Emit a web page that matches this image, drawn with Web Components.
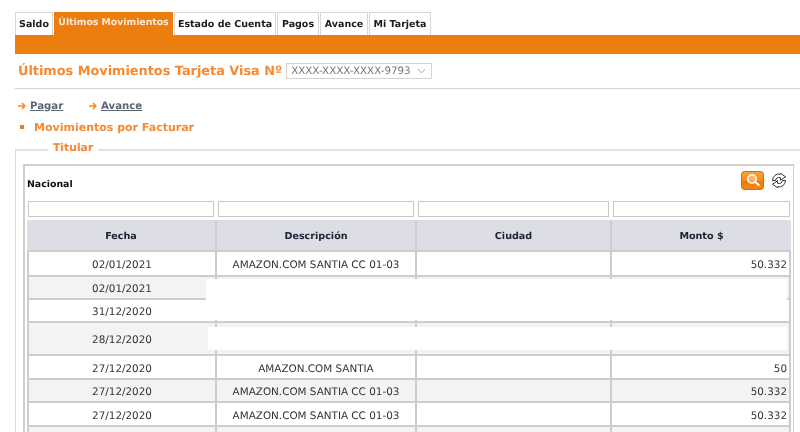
<!DOCTYPE html>
<html lang="es">
<head>
<meta charset="utf-8">
<title>Últimos Movimientos</title>
<style>
  html, body { margin: 0; padding: 0; background: #fff; overflow: hidden; }
  body { font-family: "DejaVu Sans", Verdana, sans-serif; font-size: 10.67px; color: #333; height: 432px; text-rendering: geometricPrecision; }
</style>
</head>
<body>
<card-page>
  <tab-bar>
    <tab-item style="width:38px">Saldo</tab-item>
    <tab-item active style="width:119px">Últimos Movimientos</tab-item>
    <tab-item style="width:102px">Estado de Cuenta</tab-item>
    <tab-item style="width:42px">Pagos</tab-item>
    <tab-item style="width:48px">Avance</tab-item>
    <tab-item style="width:62px">Mi Tarjeta</tab-item>
  </tab-bar>
  <card-heading number="XXXX-XXXX-XXXX-9793">Últimos Movimientos Tarjeta Visa Nº</card-heading>
  <action-links>
    <action-link style="width:71px">Pagar</action-link>
    <action-link>Avance</action-link>
  </action-links>
  <section-title>Movimientos por Facturar</section-title>
  <titular-box legend="Titular">
    <moves-table title-text="Nacional">
      <moves-row h="25" date="02/01/2021" desc="AMAZON.COM SANTIA CC 01-03" amount="50.332"></moves-row>
      <moves-row h="23" alt date="02/01/2021" cover="first"></moves-row>
      <moves-row h="23" date="31/12/2020" cover="plain"></moves-row>
      <moves-row h="33" alt date="28/12/2020" cover="second"></moves-row>
      <moves-row h="24" date="27/12/2020" desc="AMAZON.COM SANTIA" amount="50"></moves-row>
      <moves-row h="23" alt date="27/12/2020" desc="AMAZON.COM SANTIA CC 01-03" amount="50.332"></moves-row>
      <moves-row h="24" date="27/12/2020" desc="AMAZON.COM SANTIA CC 01-03" amount="50.332"></moves-row>
      <moves-row h="24" alt></moves-row>
    </moves-table>
  </titular-box>
</card-page>

<script>
class CardPage extends HTMLElement {
  constructor() {
    super();
    this.attachShadow({ mode: "open" });
    this.shadowRoot.innerHTML = `
      <style>
        :host { display: block; padding: 12px 0 0 15px; height: 420px; overflow: hidden; filter: blur(.3px); }
      </style>
      <slot></slot>`;
  }
}

class TabBar extends HTMLElement {
  constructor() {
    super();
    this.attachShadow({ mode: "open" });
    this.shadowRoot.innerHTML = `
      <style>
        :host { display: block; }
        .tabs { display: flex; gap: 1px; height: 23px; }
        .bar { height: 19px; background: #ec7e10; }
      </style>
      <div class="tabs"><slot></slot></div>
      <div class="bar"></div>`;
  }
}

class TabItem extends HTMLElement {
  constructor() {
    super();
    this.attachShadow({ mode: "open" });
    this.shadowRoot.innerHTML = `
      <style>
        :host {
          display: flex; align-items: center; justify-content: center;
          box-sizing: border-box; height: 23px; white-space: nowrap;
          border: 1px solid #d8d8d8; border-bottom: 0;
          font-weight: bold; font-size: 9.5px; color: #1c1c1c;
        }
        :host([active]) {
          background: #ec7e10; border-color: #ec7e10; color: #fde9d4;
          align-items: flex-start; padding-top: 4px; font-size: 9.3px;
        }
      </style>
      <slot></slot>`;
  }
}

class CardHeading extends HTMLElement {
  constructor() {
    super();
    this.attachShadow({ mode: "open" });
    this.shadowRoot.innerHTML = `
      <style>
        :host {
          display: flex; align-items: center; box-sizing: border-box;
          height: 35px; padding: 0 0 1px 3px; border-bottom: 1px solid #d4d4d4;
        }
        h1 { margin: 1px 0 0; font-size: 12.85px; font-weight: bold; color: #f58a32; white-space: nowrap; }
        .select {
          display: flex; align-items: center; justify-content: space-between; box-sizing: border-box;
          width: 146px; height: 16px; margin-left: 4px; padding: 0 5px 0 4px;
          border: 1px solid #d2d2d2; font-size: 10.3px; color: #777;
        }
        svg { display: block; }
      </style>
      <h1><slot></slot></h1>
      <div class="select">
        <span>${this.getAttribute("number")}</span>
        <svg width="9" height="6" viewBox="0 0 9 6"><path d="M1 1l3.5 4L8 1" fill="none" stroke="#aaa"/></svg>
      </div>`;
  }
}

class ActionLinks extends HTMLElement {
  constructor() {
    super();
    this.attachShadow({ mode: "open" });
    this.shadowRoot.innerHTML = `
      <style>
        :host { display: flex; height: 16px; margin-top: 9px; padding-left: 3px; align-items: center; }
      </style>
      <slot></slot>`;
  }
}

class ActionLink extends HTMLElement {
  constructor() {
    super();
    this.attachShadow({ mode: "open" });
    this.shadowRoot.innerHTML = `
      <style>
        :host { display: flex; align-items: center; gap: 4px; font-size: 10.2px; font-weight: bold; color: #5d6675; }
        span { text-decoration: underline; }
        svg { display: block; }
      </style>
      <svg width="8" height="8" viewBox="0 0 8 8"><path d="M0 4h6.500M4 1l3 3-3 3" fill="none" stroke="#f58a1f" stroke-width="1.5"/></svg>
      <span><slot></slot></span>`;
  }
}

class SectionTitle extends HTMLElement {
  constructor() {
    super();
    this.attachShadow({ mode: "open" });
    this.shadowRoot.innerHTML = `
      <style>
        :host {
          display: flex; align-items: center; height: 16px; margin-top: 5px; padding-left: 5px;
          font-size: 11px; font-weight: bold; color: #f58a32;
        }
        i { width: 4px; height: 4px; margin-right: 10px; background: #ee7f10; }
      </style>
      <i></i><slot></slot>`;
  }
}

class TitularBox extends HTMLElement {
  constructor() {
    super();
    this.attachShadow({ mode: "open" });
    this.shadowRoot.innerHTML = `
      <style>
        :host {
          display: block; position: relative; box-sizing: border-box;
          margin-top: 14px; padding: 13px 0 0 7px; height: 300px;
          border-top: 2px solid #e2e2e2; border-left: 1px solid #dcdcdc;
        }
        .legend {
          position: absolute; top: -10px; left: 32px; padding: 0 5px;
          background: #fff; font-size: 10.8px; font-weight: bold; color: #f58a32;
        }
      </style>
      <div class="legend">${this.getAttribute("legend")}</div>
      <slot></slot>`;
  }
}

class MovesTable extends HTMLElement {
  constructor() {
    super();
    this.attachShadow({ mode: "open" });
    const heads = ["Fecha", "Descripción", "Ciudad", "Monto $"];
    this.shadowRoot.innerHTML = `
      <style>
        :host {
          display: block; box-sizing: border-box; width: 771px; height: 290px;
          padding: 0 2px; border: solid #cfcfcf; border-width: 2px 1.5px 0 2px;
        }
        .top { display: flex; align-items: center; justify-content: space-between; height: 35px; padding: 0 4px 0 0; }
        .name { font-size: 9.4px; font-weight: bold; color: #111; margin-top: 1px; }
        .tools { display: flex; align-items: center; gap: 7px; margin-top: -7px; }
        svg { display: block; }
        .filters { display: grid; grid-template-columns: 186px 196px 191px 177px; column-gap: 4px; padding-left: 1px; }
        .filters div { box-sizing: border-box; height: 16px; border: 1px solid #c8c8c8; }
        .heads {
          display: grid; grid-template-columns: 188px 200px 195px 181px; height: 32px; margin-top: 3px;
          background: #dcdde5; border-bottom: 2px solid #cdcdcd; box-sizing: border-box; width: 764px;
        }
        .heads div {
          display: flex; align-items: center; justify-content: center; padding-top: 3px;
          font-size: 9.6px; font-weight: bold; color: #1c2333; border-left: 2px solid #cdcdcd;
        }
        .heads div:first-child { border-left: 0; }
        .rows { width: 764px; }
      </style>
      <div class="top">
        <span class="name">${this.getAttribute("title-text")}</span>
        <span class="tools">
          <svg width="23" height="19" viewBox="0 0 23 19">
            <defs><linearGradient id="g" x1="0" y1="0" x2="0" y2="1">
              <stop offset="0" stop-color="#fba23c"/><stop offset=".5" stop-color="#f78d1c"/><stop offset=".55" stop-color="#ee7a08"/><stop offset="1" stop-color="#f48a18"/>
            </linearGradient></defs>
            <rect x=".5" y=".5" width="22" height="18" rx="3" fill="url(#g)" stroke="#c9700f"/>
            <circle cx="11" cy="8" r="4.2" fill="#fff" fill-opacity=".3" stroke="#fff" stroke-width="1.5"/>
            <path d="M14.2 11l3.500 3" stroke="#fff" stroke-width="2" stroke-linecap="round"/>
          </svg>
          <svg width="16" height="15" viewBox="0 0 16 15">
            <g fill="#fff" stroke="#333" stroke-width="1" stroke-linejoin="round">
              <path id="arc" d="M1.500 7.500A6.500 6.500 0 0 1 9.500 1.200V.3l5 3.500-5 3.400V4.800A3.500 3.500 0 0 0 4.500 7.500z"/>
              <path transform="rotate(180 8 7.500)" d="M1.500 7.500A6.500 6.500 0 0 1 9.500 1.200V.3l5 3.500-5 3.400V4.800A3.500 3.500 0 0 0 4.500 7.500z"/>
            </g>
          </svg>
        </span>
      </div>
      <div class="filters"><div></div><div></div><div></div><div></div></div>
      <div class="heads">${heads.map(h => `<div>${h}</div>`).join("")}</div>
      <div class="rows"><slot></slot></div>`;
  }
}

class MovesRow extends HTMLElement {
  constructor() {
    super();
    this.attachShadow({ mode: "open" });
    const a = n => this.getAttribute(n) || "";
    const covers = {
      first: `<div class="cover" style="left:179px;top:2px;right:2px;bottom:-2px"></div>`,
      plain: `<div class="cover" style="left:179px;top:0;right:0;bottom:1px"></div>`,
      second: `<div class="cover" style="left:181px;top:4px;right:2px;bottom:4px"></div>`
    };
    this.shadowRoot.innerHTML = `
      <style>
        :host {
          display: grid; grid-template-columns: 188px 200px 195px 179px; position: relative;
          box-sizing: border-box; height: ${a("h")}px; border-bottom: 2px solid #cdcdcd; border-right: 2px solid #cdcdcd;
          color: #333;
        }
        :host([alt]) { background: #f3f3f3; }
        div { display: flex; align-items: center; justify-content: center; box-sizing: border-box; padding-top: 3px; border-left: 2px solid #cdcdcd; font-size: 10.4px; white-space: nowrap; }
        div:first-child { border-left: 0; font-size: 11px; letter-spacing: .15px; }
        div.amount { justify-content: flex-end; padding-right: 2px; }
        .cover { position: absolute; background: #fff; border: 0; padding: 0; z-index: 1; }
      </style>
      <div>${a("date")}</div>
      <div>${a("desc")}</div>
      <div></div>
      <div class="amount">${a("amount")}</div>
      ${covers[a("cover")] || ""}`;
  }
}

customElements.define("card-page", CardPage);
customElements.define("tab-bar", TabBar);
customElements.define("tab-item", TabItem);
customElements.define("card-heading", CardHeading);
customElements.define("action-links", ActionLinks);
customElements.define("action-link", ActionLink);
customElements.define("section-title", SectionTitle);
customElements.define("titular-box", TitularBox);
customElements.define("moves-table", MovesTable);
customElements.define("moves-row", MovesRow);
</script>
</body>
</html>
